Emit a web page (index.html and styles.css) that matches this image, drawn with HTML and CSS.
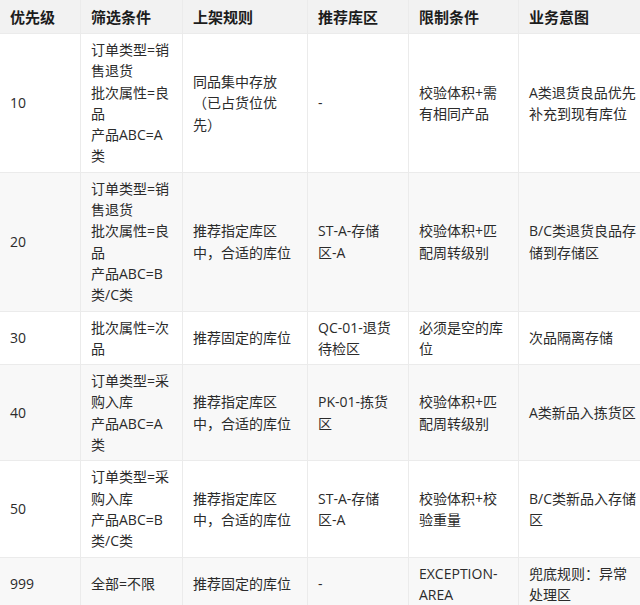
FILE: index.html
```html
<!DOCTYPE html>
<html lang="zh-CN">
<head>
<meta charset="utf-8">
<title>上架规则</title>
<link rel="stylesheet" href="styles.css">
</head>
<body>
<table class="rules">
  <colgroup>
    <col class="c-pri"><col class="c-filter"><col class="c-rule"><col class="c-zone"><col class="c-limit"><col class="c-intent">
  </colgroup>
  <thead>
    <tr><th>优先级</th><th>筛选条件</th><th>上架规则</th><th>推荐库区</th><th>限制条件</th><th>业务意图</th></tr>
  </thead>
  <tbody>
    <tr>
      <td>10</td>
      <td>订单类型=销<br>售退货<br>批次属性=良<br>品<br>产品ABC=A<br>类</td>
      <td>同品集中存放<br><span class="paren">（</span>已占货位优<br>先）</td>
      <td>-</td>
      <td>校验体积+需<br>有相同产品</td>
      <td>A类退货良品优先<br>补充到现有库位</td>
    </tr>
    <tr>
      <td>20</td>
      <td>订单类型=销<br>售退货<br>批次属性=良<br>品<br>产品ABC=B<br>类/C类</td>
      <td>推荐指定库区<br>中，合适的库位</td>
      <td>ST-A-存储<br>区-A</td>
      <td>校验体积+匹<br>配周转级别</td>
      <td>B/C类退货良品存<br>储到存储区</td>
    </tr>
    <tr>
      <td>30</td>
      <td>批次属性=次<br>品</td>
      <td>推荐固定的库位</td>
      <td>QC-01-退货<br>待检区</td>
      <td>必须是空的库<br>位</td>
      <td>次品隔离存储</td>
    </tr>
    <tr>
      <td>40</td>
      <td>订单类型=采<br>购入库<br>产品ABC=A<br>类</td>
      <td>推荐指定库区<br>中，合适的库位</td>
      <td>PK-01-拣货<br>区</td>
      <td>校验体积+匹<br>配周转级别</td>
      <td>A类新品入拣货区</td>
    </tr>
    <tr>
      <td>50</td>
      <td>订单类型=采<br>购入库<br>产品ABC=B<br>类/C类</td>
      <td>推荐指定库区<br>中，合适的库位</td>
      <td>ST-A-存储<br>区-A</td>
      <td>校验体积+校<br>验重量</td>
      <td>B/C类新品入存储<br>区</td>
    </tr>
    <tr>
      <td>999</td>
      <td>全部=不限</td>
      <td>推荐固定的库位</td>
      <td>-</td>
      <td>EXCEPTION-<br>AREA</td>
      <td>兜底规则：异常<br>处理区</td>
    </tr>
  </tbody>
</table>
</body>
</html>
```

FILE: styles.css
```css
html, body {
  margin: 0;
  padding: 0;
  background: #ffffff;
  overflow: hidden;
}

body {
  font-family: "Open Sans", "Noto Sans CJK SC", sans-serif;
  font-size: 14px;
  color: #2b2b2b;
}

.rules {
  border-collapse: collapse;
  table-layout: fixed;
  width: 648px;
  margin-left: -1px;
}

.c-pri { width: 81px; }
.c-filter { width: 102px; }
.c-rule { width: 125px; }
.c-zone { width: 101px; }
.c-limit { width: 110px; }
.c-intent { width: 129px; }

.rules th,
.rules td {
  border: 1px solid #ebebeb;
  padding: 5px 10px;
  text-align: left;
  vertical-align: middle;
  white-space: nowrap;
}

.rules th {
  background: #f2f2f2;
  font-family: "Noto Sans CJK SC", sans-serif;
  font-size: 15px;
  font-weight: 700;
  line-height: 22px;
  color: #1c1c1c;
}

.rules td {
  line-height: 21.3px;
}

.rules tbody tr:nth-child(even) td {
  background: #f8f8f8;
}

.rules tbody tr:nth-child(odd) td {
  background: #ffffff;
}

.rules thead tr th {
  border-top-color: #f2f2f2;
}
```
